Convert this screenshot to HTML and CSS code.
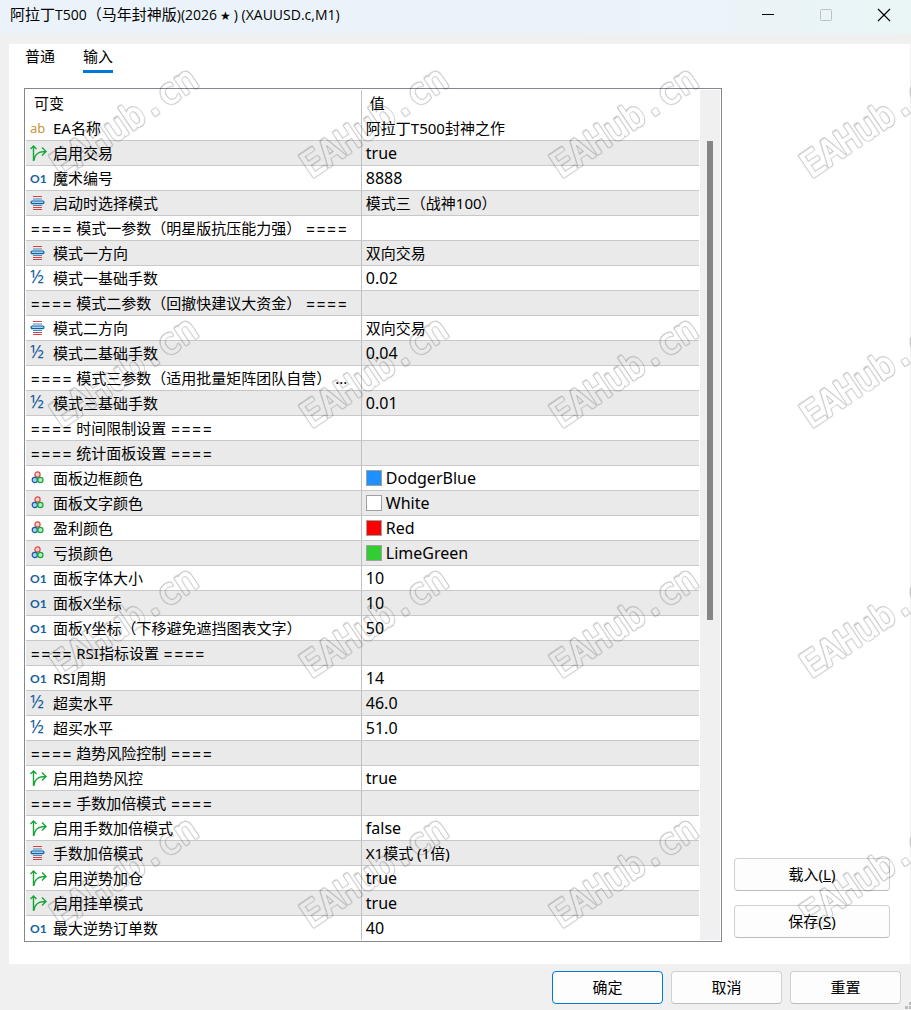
FILE: index.html
```html
<!DOCTYPE html>
<html lang="zh-CN">
<head>
  <meta charset="UTF-8">
  <meta name="viewport" content="width=device-width, initial-scale=1.0">
  <title>阿拉丁T500</title>
  <link rel="stylesheet" href="styles.css">
</head>
<body>

  <!-- 图标 -->
  <svg class="defs" width="0" height="0" aria-hidden="true">
    <symbol id="i-bool" viewBox="0 0 17 16">
      <path d="M3.500 16V1M.5 4l3-3 3 3M4 15.500C4.500 10 7 6.500 16 6.500M12 2.500l4 4-4 4" fill="none" stroke="#16a637" stroke-width="1.4"/>
    </symbol>
    <symbol id="i-enum" viewBox="0 0 17 16">
      <path d="M3 1.500h9M3 12.500h9M3 14.500h9" stroke="#dc4040" stroke-width="1"/>
      <path d="M3 4h9M3 10.500h9" stroke="#3d8fc4" stroke-width="1.2"/>
      <rect x="1" y="6" width="13" height="2.600" rx="1.300" fill="#a8d4f2" stroke="#14609f" stroke-width="1.2"/>
    </symbol>
    <symbol id="i-color" viewBox="0 0 17 16">
      <circle cx="7.500" cy="4.500" r="2.600" fill="#f8d0cd" stroke="#d94a42" stroke-width="1.200"/>
      <circle cx="4.800" cy="10" r="2.600" fill="#a8d4f2" stroke="#14609f" stroke-width="1.200"/>
      <circle cx="10.400" cy="10" r="2.600" fill="#b5ebbd" stroke="#16a637" stroke-width="1.200"/>
    </symbol>
  </svg>

  <div class="dialog">
    <!-- 标题栏 -->
    <div class="titlebar">
      <h1>阿拉丁<span>T500</span>（马年封神版<span>)(2026</span><span class="star">★</span><span>) (XAUUSD.c,M1)</span></h1>
      <div class="window-buttons">
        <button type="button" aria-label="最小化"><svg width="14" height="14"><path d="M1 6.500h12" stroke="#000"/></svg></button>
        <button type="button" aria-label="最大化" disabled><svg width="14" height="14"><rect x="1.500" y="1.500" width="11" height="11" rx="1" fill="none" stroke="#bcc3c6"/></svg></button>
        <button type="button" aria-label="关闭"><svg width="14" height="14"><path d="M1 1l12 12M13 1L1 13" stroke="#000" stroke-width="1.200"/></svg></button>
      </div>
    </div>

    <!-- 输入面板 -->
    <div class="panel">
      <div class="tabs" role="tablist">
        <button type="button" class="tab" role="tab" aria-selected="false">普通</button>
        <button type="button" class="tab active" role="tab" aria-selected="true">输入</button>
      </div>

      <div class="content">
        <div class="grid">
          <table>
            <thead>
              <tr><th>可变</th><th>值</th></tr>
            </thead>
            <tbody>
              <tr><td><span class="icon ab">ab</span>EA名称</td><td>阿拉丁T500封神之作</td></tr>
              <tr><td><svg class="icon"><use href="#i-bool"/></svg>启用交易</td><td class="latin">true</td></tr>
              <tr><td><span class="icon int">O1</span>魔术编号</td><td class="latin">8888</td></tr>
              <tr><td><svg class="icon"><use href="#i-enum"/></svg>启动时选择模式</td><td>模式三（战神100）</td></tr>
              <tr><td class="section"><span>====</span> 模式一参数（明星版抗压能力强） <span>====</span></td><td></td></tr>
              <tr><td><svg class="icon"><use href="#i-enum"/></svg>模式一方向</td><td>双向交易</td></tr>
              <tr><td><span class="icon half">½</span>模式一基础手数</td><td class="latin">0.02</td></tr>
              <tr><td class="section"><span>====</span> 模式二参数（回撤快建议大资金） <span>====</span></td><td></td></tr>
              <tr><td><svg class="icon"><use href="#i-enum"/></svg>模式二方向</td><td>双向交易</td></tr>
              <tr><td><span class="icon half">½</span>模式二基础手数</td><td class="latin">0.04</td></tr>
              <tr><td class="section"><span>====</span> 模式三参数（适用批量矩阵团队自营） ...</td><td></td></tr>
              <tr><td><span class="icon half">½</span>模式三基础手数</td><td class="latin">0.01</td></tr>
              <tr><td class="section"><span>====</span> 时间限制设置 <span>====</span></td><td></td></tr>
              <tr><td class="section"><span>====</span> 统计面板设置 <span>====</span></td><td></td></tr>
              <tr><td><svg class="icon"><use href="#i-color"/></svg>面板边框颜色</td><td class="latin"><i class="swatch blue"></i>DodgerBlue</td></tr>
              <tr><td><svg class="icon"><use href="#i-color"/></svg>面板文字颜色</td><td class="latin"><i class="swatch white"></i>White</td></tr>
              <tr><td><svg class="icon"><use href="#i-color"/></svg>盈利颜色</td><td class="latin"><i class="swatch red"></i>Red</td></tr>
              <tr><td><svg class="icon"><use href="#i-color"/></svg>亏损颜色</td><td class="latin"><i class="swatch green"></i>LimeGreen</td></tr>
              <tr><td><span class="icon int">O1</span>面板字体大小</td><td class="latin">10</td></tr>
              <tr><td><span class="icon int">O1</span>面板X坐标</td><td class="latin">10</td></tr>
              <tr><td><span class="icon int">O1</span>面板Y坐标（下移避免遮挡图表文字）</td><td class="latin">50</td></tr>
              <tr><td class="section"><span>====</span> RSI指标设置 <span>====</span></td><td></td></tr>
              <tr><td><span class="icon int">O1</span>RSI周期</td><td class="latin">14</td></tr>
              <tr><td><span class="icon half">½</span>超卖水平</td><td class="latin">46.0</td></tr>
              <tr><td><span class="icon half">½</span>超买水平</td><td class="latin">51.0</td></tr>
              <tr><td class="section"><span>====</span> 趋势风险控制 <span>====</span></td><td></td></tr>
              <tr><td><svg class="icon"><use href="#i-bool"/></svg>启用趋势风控</td><td class="latin">true</td></tr>
              <tr><td class="section"><span>====</span> 手数加倍模式 <span>====</span></td><td></td></tr>
              <tr><td><svg class="icon"><use href="#i-bool"/></svg>启用手数加倍模式</td><td class="latin">false</td></tr>
              <tr><td><svg class="icon"><use href="#i-enum"/></svg>手数加倍模式</td><td>X1模式 (1倍)</td></tr>
              <tr><td><svg class="icon"><use href="#i-bool"/></svg>启用逆势加仓</td><td class="latin">true</td></tr>
              <tr><td><svg class="icon"><use href="#i-bool"/></svg>启用挂单模式</td><td class="latin">true</td></tr>
              <tr><td><span class="icon int">O1</span>最大逆势订单数</td><td class="latin">40</td></tr>
            </tbody>
          </table>
          <div class="scrollbar"><div class="thumb"></div></div>
        </div>

        <div class="side">
          <button type="button" class="btn">载入(<u>L</u>)</button>
          <button type="button" class="btn">保存(<u>S</u>)</button>
        </div>
      </div>
    </div>

    <!-- 底部按钮 -->
    <div class="footer">
      <button type="button" class="btn primary">确定</button>
      <button type="button" class="btn">取消</button>
      <button type="button" class="btn">重置</button>
      <svg class="grip" width="6" height="8" aria-hidden="true"><path d="M4 0h2v3H4zM0 4h3v3H0zM4 4h2v3H4z" fill="#bdbdbd"/></svg>
    </div>

    <!-- 水印：文字描边后用蒙版挖空，只留轮廓 -->
    <svg class="watermark" aria-hidden="true">
      <mask id="cut" maskUnits="userSpaceOnUse" x="0" y="0" width="100%" height="100%">
        <rect width="100%" height="100%" fill="#fff"/>
        <use href="#marks" class="inner"/>
      </mask>
      <g mask="url(#cut)" class="outer">
        <g id="marks">
          <text transform="translate(61 179) rotate(-34)">EAHub.cn</text>
          <text transform="translate(311 179) rotate(-34)">EAHub.cn</text>
          <text transform="translate(561 179) rotate(-34)">EAHub.cn</text>
          <text transform="translate(811 179) rotate(-34)">EAHub.cn</text>
          <text transform="translate(61 429) rotate(-34)">EAHub.cn</text>
          <text transform="translate(311 429) rotate(-34)">EAHub.cn</text>
          <text transform="translate(561 429) rotate(-34)">EAHub.cn</text>
          <text transform="translate(811 429) rotate(-34)">EAHub.cn</text>
          <text transform="translate(61 679) rotate(-34)">EAHub.cn</text>
          <text transform="translate(311 679) rotate(-34)">EAHub.cn</text>
          <text transform="translate(561 679) rotate(-34)">EAHub.cn</text>
          <text transform="translate(811 679) rotate(-34)">EAHub.cn</text>
          <text transform="translate(61 929) rotate(-34)">EAHub.cn</text>
          <text transform="translate(311 929) rotate(-34)">EAHub.cn</text>
          <text transform="translate(561 929) rotate(-34)">EAHub.cn</text>
          <text transform="translate(811 929) rotate(-34)">EAHub.cn</text>
        </g>
      </g>
    </svg>
  </div>

</body>
</html>
```
FILE: styles.css
```css
/* 全体 */
* {
  box-sizing: border-box;
}

body {
  margin: 0;
  background: #f0f0f0;
  color: #000;
  font-family: "Noto Sans", "Noto Sans CJK SC", sans-serif;
  font-size: 15px;
}

button {
  font: inherit;
  color: inherit;
}

.defs {
  position: absolute;
}

.dialog {
  position: relative;
  overflow: hidden;
}

/* 标题栏 */
.titlebar {
  display: flex;
  justify-content: space-between;
  align-items: center;
  height: 34px;
  padding: 0 20px 4px 10px;
  background: linear-gradient(90deg, #ebf3fa 60%, #eaf5f6);
}

.titlebar h1 {
  margin: 0;
  font-size: 15px;
  font-weight: normal;
  line-height: 30px;
  font-family: "Open Sans", "Noto Sans CJK SC", sans-serif;
  white-space: nowrap;
}

.titlebar span {
  font-size: 14px;
}

.titlebar .star {
  padding: 0 3px;
  font-family: "DejaVu Sans", sans-serif;
  font-size: 12px;
}

.window-buttons {
  display: flex;
  gap: 44px;
}

.window-buttons button {
  display: flex;
  padding: 0;
  border: 0;
  background: none;
}

/* 面板 */
.panel {
  margin: 10px 1px 0 9px;
  padding: 0 20px 22px 15px;
  background: #fff;
}

.tabs {
  display: flex;
  gap: 28px;
  height: 44px;
  padding-left: 1px;
}

.tab {
  height: 29px;
  padding: 0 0 2px;
  border: 0;
  border-bottom: 3px solid transparent;
  background: none;
  line-height: 24px;
}

.tab.active {
  border-bottom-color: #0078d7;
}

.content {
  display: flex;
  gap: 12px;
}

.grid {
  display: flex;
  flex: 1;
  min-width: 0;
  padding: 1px;
  border: 1px solid #828790;
}

/* 参数表 */
table {
  flex: 1;
  min-width: 0;
  table-layout: fixed;
  border-collapse: separate;
  border-spacing: 0;
}

th,
td {
  width: 50%;
  height: 25px;
  padding: 0 4px;
  border-bottom: 1px solid #c8c8c8;
  line-height: 24px;
  text-align: left;
  font-weight: normal;
  white-space: nowrap;
}

th {
  height: 26px;
  padding: 0 8px;
  border-bottom: 0;
}

th:first-child,
td:first-child {
  width: 49.8%;
  border-right: 1px solid #c0c0c0;
}

tbody tr:nth-child(even) {
  background: #eaeaea;
}

tbody tr:last-child td {
  height: 24px;
  border-bottom: 0;
}

.section span {
  font-family: Inter, sans-serif;
  font-size: 16px;
  line-height: 16px;
}

.latin {
  font-size: 16px;
}

/* 行图标 */
.icon {
  display: inline-block;
  width: 17px;
  height: 16px;
  margin-right: 6px;
  line-height: 16px;
  vertical-align: -2px;
}

.ab,
.int,
.half {
  vertical-align: 1px;
}

.ab {
  color: #c8963c;
  font-size: 13px;
}

.int {
  color: #14609f;
  font-family: Lato, sans-serif;
  font-size: 12px;
  font-weight: bold;
}

.half {
  color: #14609f;
  font-size: 18px;
}

.swatch {
  display: inline-block;
  width: 16px;
  height: 16px;
  margin-right: 4px;
  border: 1px solid #a0a0a0;
  vertical-align: -2px;
}

.blue {
  background: #1e90ff;
}

.white {
  background: #fff;
}

.red {
  background: #f00;
}

.green {
  background: #32cd32;
}

/* 滚动条 */
.scrollbar {
  width: 20px;
  margin-left: 1px;
  padding: 51px 7px 0;
  background: #f0f0f0;
}

.thumb {
  height: 479px;
  background: #858585;
}

/* 按钮 */
.side {
  display: flex;
  flex-direction: column;
  justify-content: flex-end;
  gap: 14px;
  width: 156px;
  padding-bottom: 4px;
}

.btn {
  height: 33px;
  padding: 0 0 2px;
  border: 1px solid #d0d0d0;
  border-bottom-color: #bcbcbc;
  border-radius: 4px;
  background: #fdfdfd;
}

.btn.primary {
  border-color: #0078d4;
}

.footer {
  position: relative;
  display: flex;
  justify-content: flex-end;
  gap: 8px;
  padding: 7px 10px 6px;
}

.footer .btn {
  width: 111px;
}

.grip {
  position: absolute;
  right: 0;
  bottom: 0;
}

/* 水印 */
.watermark {
  position: absolute;
  top: 0;
  left: 0;
  width: 100%;
  height: 100%;
  pointer-events: none;
  font-family: "DejaVu Sans Mono", monospace;
  font-size: 35px;
  stroke-linejoin: round;
}

.outer {
  fill: #000;
  stroke: #000;
  stroke-width: 3px;
  opacity: 0.22;
}

.inner {
  fill: #000;
  stroke: #000;
  stroke-width: 1px;
}
```
